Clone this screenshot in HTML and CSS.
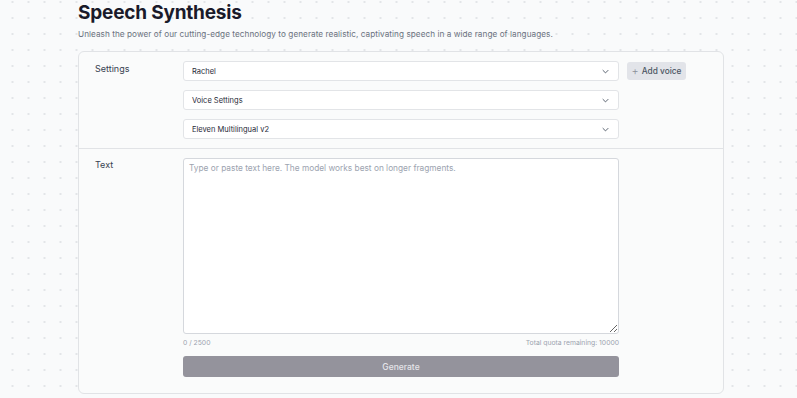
FILE: index.html
```html
<!DOCTYPE html>
<html>
<head>
<meta charset="utf-8">
<link rel="stylesheet" href="styles.css">
</head>
<body>
<main class="page">
  <h1 class="title">Speech Synthesis</h1>
  <p class="subtitle">Unleash the power of our cutting-edge technology to generate realistic, captivating speech in a wide range of languages.</p>
  <section class="card">
    <div class="row settings">
      <div class="label">Settings</div>
      <div class="fields">
        <div class="line">
          <div class="select"><span>Rachel</span><svg class="chev" viewBox="0 0 10 6" width="7" height="5"><path d="M1 1l4 4 4-4" fill="none" stroke="#4b5563" stroke-width="1.3"/></svg></div>
          <button class="add"><span class="plus">+</span>Add voice</button>
        </div>
        <div class="select"><span>Voice Settings</span><svg class="chev" viewBox="0 0 10 6" width="7" height="5"><path d="M1 1l4 4 4-4" fill="none" stroke="#4b5563" stroke-width="1.3"/></svg></div>
        <div class="select"><span>Eleven Multilingual v2</span><svg class="chev" viewBox="0 0 10 6" width="7" height="5"><path d="M1 1l4 4 4-4" fill="none" stroke="#4b5563" stroke-width="1.3"/></svg></div>
      </div>
    </div>
    <div class="row text">
      <div class="label">Text</div>
      <div class="fields wide">
        <textarea class="area" placeholder="Type or paste text here. The model works best on longer fragments."></textarea>
        <div class="meta"><span>0 / 2500</span><span>Total quota remaining: 10000</span></div>
        <button class="generate">Generate</button>
      </div>
    </div>
  </section>
</main>
</body>
</html>
```

FILE: styles.css
```css
html, body {
  margin: 0;
  padding: 0;
}
body {
  background-color: #f9fafb;
  background-image: radial-gradient(circle, #e3e5e8 1px, transparent 1.3px);
  background-size: 16px 16px;
  background-position: 4.5px -6px;
  font-family: Inter, "Noto Sans", sans-serif;
  color: #111827;
  height: 398px;
  overflow: hidden;
}
.page {
  padding-left: 78px;
  width: 646px;
}
.title {
  margin: 0;
  padding-top: 1px;
  font-size: 19px;
  line-height: 23px;
  font-weight: 700;
  color: #1a1a2a;
  letter-spacing: -0.2px;
}
.subtitle {
  margin: 3px 0 0;
  font-size: 8.2px;
  line-height: 14px;
  color: #6b7280;
  letter-spacing: 0.05px;
}
.card {
  margin-top: 10px;
  background: #fafbfb;
  border: 1px solid #e1e3e6;
  border-radius: 6px;
}
.row {
  display: flex;
}
.settings {
  padding: 9px 0 9px;
  border-bottom: 1px solid #e1e3e6;
}
.text {
  padding: 9px 0 16px;
}
.label {
  width: 88px;
  padding-left: 16px;
  font-size: 9px;
  line-height: 11px;
  color: #374151;
  padding-top: 2px;
}
.text .label {
  padding-top: 1px;
}
.fields {
  display: flex;
  flex-direction: column;
  gap: 9px;
}
.line {
  display: flex;
  gap: 8px;
  align-items: flex-start;
}
.select {
  height: 18px;
  border: 1px solid #e2e4e7;
  border-radius: 3px;
  background: #ffffff;
  display: flex;
  align-items: center;
  justify-content: space-between;
  padding: 0 0 0 8px;
  box-sizing: content-box;
  width: 426px;
  font-size: 7.5px;
  color: #1f2937;
}
.chev {
  margin-right: 9px;
}
.add {
  margin-top: 1px;
  height: 18px;
  width: 59px;
  border: none;
  border-radius: 3px;
  background: #e2e4e9;
  color: #4b5563;
  font-family: inherit;
  font-size: 8.3px;
  font-weight: 500;
  padding: 0;
  display: flex;
  align-items: center;
  justify-content: center;
  gap: 3px;
}
.plus {
  font-weight: 300;
  font-size: 11px;
  color: #8b8f99;
  line-height: 1;
}
.wide {
  gap: 0;
  width: 436px;
}
.area {
  width: 436px;
  height: 176px;
  box-sizing: border-box;
  margin: 0;
  border: 1px solid #d5d8dd;
  border-radius: 3px;
  background: #ffffff;
  padding: 4px 5px;
  font-family: inherit;
  font-size: 8.3px;
  line-height: 11px;
  color: #111827;
  display: block;
}
.area::placeholder {
  color: #9ca3af;
}
.meta {
  display: flex;
  justify-content: space-between;
  font-size: 6.8px;
  line-height: 9px;
  color: #9ca3af;
  margin-top: 4px;
}
.generate {
  margin-top: 9px;
  height: 21px;
  width: 436px;
  border: none;
  border-radius: 3px;
  background: #94939c;
  color: #e5e5ea;
  font-family: inherit;
  font-size: 8.5px;
  font-weight: 500;
  padding: 0;
}
```
